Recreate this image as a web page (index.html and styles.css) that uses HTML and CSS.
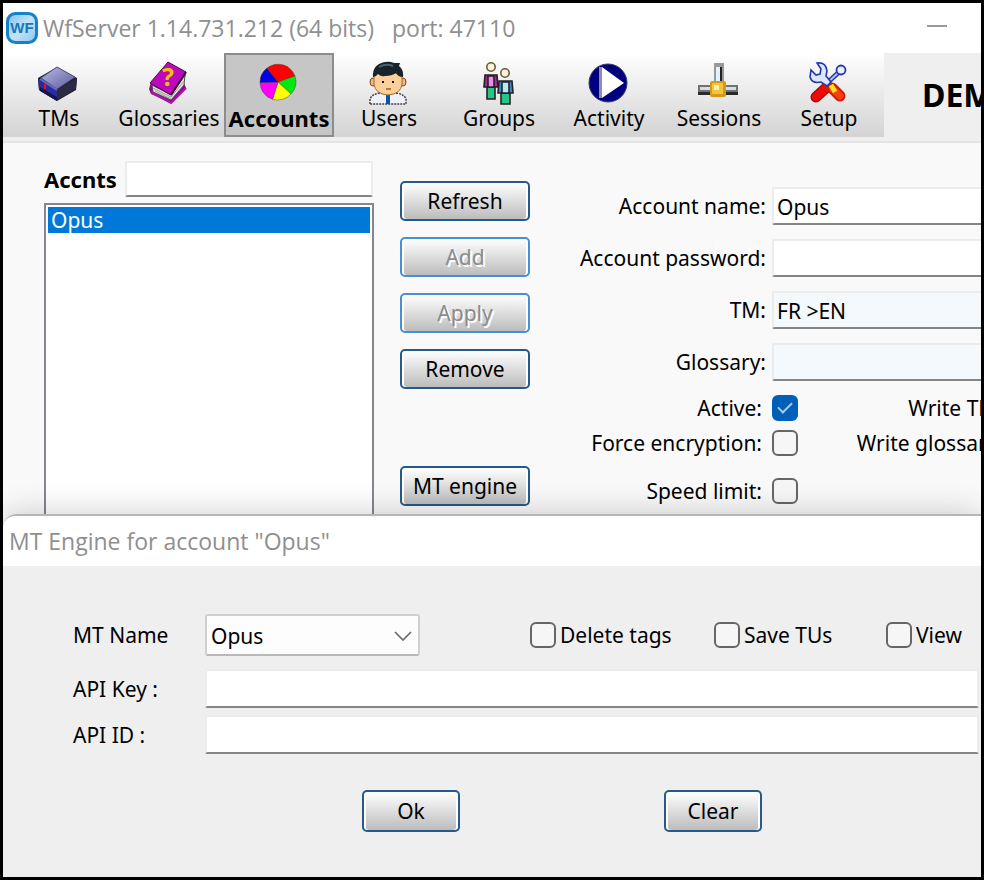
FILE: index.html
```html
<!DOCTYPE html>
<html lang="en">
<head>
<meta charset="utf-8">
<title>WfServer</title>
<link rel="stylesheet" href="styles.css">
</head>
<body>
<div class="window">
  <header class="titlebar">
    <svg class="logo" viewBox="0 0 32 32" aria-hidden="true">
      <defs><linearGradient id="lg" x1="0" y1="0" x2="1" y2="1"><stop offset="0" stop-color="#7fc0ea"/><stop offset=".5" stop-color="#c3e2f7"/><stop offset="1" stop-color="#8cc6ec"/></linearGradient></defs>
      <rect x="1.5" y="1.5" width="29" height="29" rx="8" fill="url(#lg)" stroke="#1482c6" stroke-width="3"/>
      <text x="16" y="21" text-anchor="middle" class="logo-text">WF</text>
    </svg>
    <h1 class="title">WfServer 1.14.731.212 (64 bits)</h1>
    <span class="title">port: 47110</span>
    <button class="minimize" type="button" aria-label="Minimize"></button>
  </header>

  <div class="topbar">
    <nav class="toolbar">
      <button class="tool" type="button">
        <svg class="icon" viewBox="0 0 44 44" aria-hidden="true">
          <defs><linearGradient id="tm" x1="0" y1="0" x2="1" y2="1"><stop offset="0" stop-color="#b9b9e6"/><stop offset="1" stop-color="#5c5c9c"/></linearGradient></defs>
          <path d="M20 6 L40 17 L39 29 L20 40 L2 29 L1 17Z" fill="#1c1c34"/>
          <path d="M1 18 L20 29 V40 L2 29Z" fill="#2b2ba0"/>
          <path d="M3 26 L20 36 V40 L3 30Z" fill="#15154e"/>
          <path d="M20 29 L40 17 L39 28 L20 39Z" fill="#2a2a42"/>
          <path d="M20 6 L38 16 L20 28 L4 17Z" fill="url(#tm)" stroke="#55557c"/>
          <path d="M3 18 L20 29" fill="none" stroke="#6b6bc4" stroke-width="2"/>
          <rect x="7" y="23" width="2" height="5" fill="#f01010"/>
        </svg>
        <span>TMs</span>
      </button>
      <button class="tool" type="button">
        <svg class="icon" viewBox="0 0 44 44" aria-hidden="true">
          <path d="M4 21 L2 28 L4 33 L24 42 L39 27 L37 22 L39 11Z" fill="#8a0a8a"/>
          <path d="M5 24 L24 34 L38 14 L37 24 L24 39 L6 31Z" fill="#e4e4dc" stroke="#55505a"/>
          <path d="M6 27 L24 36 L37 20 M8 30 L24 38" stroke="#9a9a94" fill="none"/>
          <path d="M4 31 L24 42 L39 27" fill="none" stroke="#b011b0" stroke-width="2"/>
          <path d="M21 1 L39 11 L24 34 L3 22Z" fill="#bd08bd" stroke="#55064f"/>
          <path d="M39 11 L24 34" stroke="#33062f" stroke-width="2"/>
          <text x="21" y="25" text-anchor="middle" class="book-mark">?</text>
        </svg>
        <span>Glossaries</span>
      </button>
      <button class="tool tool-active" type="button" aria-pressed="true">
        <svg class="icon" viewBox="0 0 44 44" aria-hidden="true">
          <g stroke="#303030" stroke-width=".4">
            <path d="M21 21 L9.7 7.3 A18 18 0 0 1 38 15Z" fill="#f00"/>
            <path d="M21 21 L38 15 A18 18 0 0 1 34 33Z" fill="#00e810"/>
            <path d="M21 21 L34 33 A18 18 0 0 1 15.5 38.3Z" fill="#ff0"/>
            <path d="M21 21 L15.5 38.3 A18 18 0 0 1 3 21.5Z" fill="#f0f"/>
            <path d="M21 21 L3 21.5 A18 18 0 0 1 9.7 7.3Z" fill="#0000e0"/>
          </g>
        </svg>
        <span>Accounts</span>
      </button>
      <button class="tool" type="button">
        <svg class="icon" viewBox="0 0 44 44" aria-hidden="true">
          <path d="M3 43 V38 Q5 33 13 32 H29 Q37 33 39 38 V43Z" fill="#eef1fa" stroke="#444" stroke-width="1.5" stroke-dasharray="2 1"/>
          <path d="M13 30 H29 L26 34 H16Z" fill="#efb97c"/>
          <path d="M19 34 H23 V43 H19Z" fill="#0a55a8"/>
          <ellipse cx="6" cy="21" rx="3" ry="4" fill="#f2b774" stroke="#7a4a20"/>
          <ellipse cx="36" cy="21" rx="3" ry="4" fill="#f2b774" stroke="#7a4a20"/>
          <path d="M7 12 H35 V23 Q34 33 21 34 Q8 33 7 23Z" fill="#fbd09a" stroke="#a06a38"/>
          <path d="M6 16 Q5 7 12 3 Q20 -1 27 2 L33 2 L32 5 Q37 9 36 16 Q31 16 29 12 Q25 15 18 15 Q14 16 11 13 Q9 16 6 16Z" fill="#17232b"/>
          <path d="M12 6 Q19 2 26 5" stroke="#4c6270" stroke-width="2" fill="none"/>
          <path d="M15 20 H17 V22 H15Z M25 20 H27 V22 H25Z" fill="#111"/>
          <path d="M19 28 H24" stroke="#9b5a30" stroke-width="1.5"/>
        </svg>
        <span>Users</span>
      </button>
      <button class="tool" type="button">
        <svg class="icon" viewBox="0 0 44 44" aria-hidden="true">
          <g stroke="#222" stroke-width="1.6">
            <circle cx="14" cy="6" r="4.2" fill="#fff3dc" stroke="#6b5a3a"/>
            <path d="M10 26 H18 V38 H10Z" fill="#25c58a"/>
            <path d="M8 14 H20 L21 26 H7Z" fill="#a52a9a"/>
            <path d="M11 15 H17 V26 H11Z" fill="#f08af0"/>
            <circle cx="28" cy="12" r="4.2" fill="#fff3dc" stroke="#6b5a3a"/>
            <path d="M24 32 H33 V43 H24Z" fill="#25c58a"/>
            <path d="M22 20 H35 L36 32 H21Z" fill="#3f86c4"/>
            <path d="M25 21 H32 V32 H25Z" fill="#b5e8ff"/>
          </g>
        </svg>
        <span>Groups</span>
      </button>
      <button class="tool" type="button">
        <svg class="icon" viewBox="0 0 44 44" aria-hidden="true">
          <circle cx="21" cy="22" r="19" fill="#00007e" stroke="#3c3c66"/>
          <path d="M12 6 H15 V37 H12Z" fill="#8c8cb0"/>
          <path d="M15 6 L37 22 L15 37Z" fill="#fff"/>
        </svg>
        <span>Activity</span>
      </button>
      <button class="tool" type="button">
        <svg class="icon" viewBox="0 0 44 44" aria-hidden="true">
          <rect x="17" y="2" width="10" height="20" fill="#999"/>
          <rect x="19" y="6" width="4" height="16" fill="#e4f2fb"/>
          <rect x="23" y="6" width="2" height="16" fill="#222"/>
          <rect x="1" y="24" width="40" height="10" fill="#6f7376"/>
          <rect x="3" y="26" width="36" height="3" fill="#d5dfe2"/>
          <rect x="1" y="31" width="40" height="3" fill="#2a2a2a"/>
          <rect x="13" y="20" width="16" height="16" rx="2" fill="#d49a18"/>
          <rect x="15" y="22" width="11" height="11" fill="#f2c440"/>
          <rect x="17" y="24" width="5" height="5" fill="#fff0a8"/>
        </svg>
        <span>Sessions</span>
      </button>
      <button class="tool" type="button">
        <svg class="icon" viewBox="0 0 44 44" aria-hidden="true">
          <path d="M20 26 L9 36" stroke="#a80808" stroke-width="11" stroke-linecap="round"/>
          <path d="M20 26 L9 36" stroke="#ef0808" stroke-width="8" stroke-linecap="round"/>
          <path d="M25 27 L33 35" stroke="#d01c08" stroke-width="11" stroke-linecap="round"/>
          <path d="M26 28 L33 35" stroke="#ff3b10" stroke-width="7" stroke-linecap="round"/>
          <path d="M24 24 L28 31" stroke="#ffe21a" stroke-width="5"/>
          <path d="M19 23 L31 12" stroke="#2438a8" stroke-width="5"/>
          <path d="M19 23 L31 12" stroke="#a9c0f4" stroke-width="2"/>
          <circle cx="34" cy="9" r="4.5" fill="#e8eeff" stroke="#2438a8" stroke-width="1.8"/>
          <path d="M10 2 Q19 1 20 10 L19 15 L24 21 L20 25 L14 21 Q5 23 3 16 L4 9 L9 14 L13 13 L14 8Z" fill="#dce7ff" stroke="#2438a8" stroke-width="1.6"/>
        </svg>
        <span>Setup</span>
      </button>
    </nav>
    <div class="mode">DEM</div>
  </div>

  <main class="accounts">
    <section class="picker">
      <div class="search">
        <label class="search-label" for="accnts">Accnts</label>
        <input class="field search-field" id="accnts" type="text">
      </div>
      <ul class="list" aria-label="Accounts">
        <li class="list-item">Opus</li>
      </ul>
    </section>

    <div class="actions">
      <button class="btn" type="button">Refresh</button>
      <button class="btn" type="button" disabled>Add</button>
      <button class="btn" type="button" disabled>Apply</button>
      <button class="btn" type="button">Remove</button>
      <button class="btn btn-engine" type="button">MT engine</button>
    </div>

    <form class="details">
      <div class="row"><label for="name">Account name:</label><input class="field" id="name" type="text" value="Opus"></div>
      <div class="row"><label for="pass">Account password:</label><input class="field" id="pass" type="password"></div>
      <div class="row"><label for="tm-path">TM:</label><input class="field field-tint" id="tm-path" type="text" value="FR &gt;EN"></div>
      <div class="row"><label for="gloss">Glossary:</label><input class="field field-tint" id="gloss" type="text"></div>
      <div class="checks">
        <div class="row"><label for="active">Active:</label><input class="check" id="active" type="checkbox" checked><span class="extra">Write TM:</span></div>
        <div class="row"><label for="force">Force encryption:</label><input class="check" id="force" type="checkbox"><span class="extra">Write glossary:</span></div>
        <div class="row row-speed"><label for="speed">Speed limit:</label><input class="check" id="speed" type="checkbox"></div>
      </div>
    </form>
  </main>

  <section class="dialog" role="dialog" aria-labelledby="dlg-title">
    <h2 class="title dialog-title" id="dlg-title">MT Engine for account "Opus"</h2>
    <form class="dialog-body">
      <div class="drow drow-first">
        <label for="mt">MT Name</label>
        <div class="select-wrap">
          <select class="select" id="mt"><option>Opus</option></select>
          <svg class="chevron" viewBox="0 0 18 10" aria-hidden="true"><path d="M1 1 L9 9 L17 1" fill="none" stroke="#666" stroke-width="1.6"/></svg>
        </div>
        <div class="options">
          <label class="option"><input class="check" type="checkbox">Delete tags</label>
          <label class="option"><input class="check" type="checkbox">Save TUs</label>
          <label class="option"><input class="check" type="checkbox">View</label>
        </div>
      </div>
      <div class="drow"><label for="key">API Key :</label><input class="field" id="key" type="text"></div>
      <div class="drow"><label for="id">API ID :</label><input class="field" id="id" type="text"></div>
      <div class="buttons">
        <button class="btn btn-dialog" type="button">Ok</button>
        <button class="btn btn-dialog" type="button">Clear</button>
      </div>
    </form>
  </section>
</div>
</body>
</html>
```
FILE: styles.css
```css
* { box-sizing: border-box; }

body {
  margin: 0;
  background: #000;
  color: #000;
  font: 21px/26px "Noto Sans", "Open Sans", sans-serif;
}

button, input, select { font: inherit; color: inherit; margin: 0; }

.window {
  display: flex;
  flex-direction: column;
  min-height: 100vh;
  border: 3px solid #000;
  background: #f9f9f9;
  overflow: hidden;
}

/* Title bar */
.titlebar {
  display: flex;
  align-items: center;
  height: 50px;
  padding: 0 34px 0 3px;
  background: #fff;
}
.logo { width: 32px; height: 32px; margin-right: 5px; }
.logo-text { font: bold 15px "Liberation Sans", sans-serif; fill: #1378bd; }
.title {
  margin: 0;
  color: #8f8f8f;
  font: 23px/32px "Open Sans", "Noto Sans", sans-serif;
  white-space: nowrap;
}
.titlebar .title + .title { margin-left: 18px; }
.minimize {
  width: 20px;
  height: 20px;
  margin: 0 0 4px auto;
  padding: 0;
  border: 0;
  background: linear-gradient(#999, #999) center / 20px 2px no-repeat;
}

/* Toolbar */
.topbar {
  display: flex;
  background: #efefef;
  border-bottom: 2px solid #e4e4e4;
  height: 90px;
  padding-bottom: 4px;
}
.toolbar {
  display: flex;
  flex: none;
  padding-left: 1px;
  background: linear-gradient(#fff, #d3d3d3);
}
.tool {
  display: flex;
  flex-direction: column;
  align-items: center;
  width: 110px;
  padding: 6px 0 0;
  border: 2px solid transparent;
  background: none;
  white-space: nowrap;
}
.tool-active { border-color: #8c8c8c; background: #c6c6c6; font-size: 22px; font-weight: bold; }
.icon { width: 44px; height: 44px; }
.book-mark { font: bold 25px "Noto Sans", sans-serif; fill: #f0c000; }
.mode {
  flex: 1;
  min-width: 0;
  padding-left: 38px;
  font-size: 32px;
  font-weight: bold;
  line-height: 84px;
  overflow: hidden;
}

/* Accounts pane */
.accounts {
  display: flex;
  flex: 1;
  padding-left: 41px;
  overflow: hidden;
}
.picker {
  display: flex;
  flex: none;
  flex-direction: column;
  gap: 6px;
  width: 330px;
  padding-top: 18px;
}
.search { display: flex; align-items: center; justify-content: space-between; padding-right: 1px; }
.search-label { font-size: 22px; font-weight: bold; }
.field {
  flex: 1;
  min-width: 0;
  height: 38px;
  padding: 2px 3px 0;
  border: 2px solid #ececec;
  border-bottom-color: #858585;
  border-radius: 2px;
  background: #fff;
}
.search-field { flex: none; width: 248px; height: 36px; }
.field-tint { background: #f4f9fd; }
.list {
  flex: 1;
  margin: 0;
  padding: 2px;
  border: 2px solid #828790;
  border-bottom: 0;
  background: #fff;
  list-style: none;
}
.list-item { padding-left: 3px; background: #0078d7; color: #fff; }

.actions {
  display: flex;
  flex: none;
  flex-direction: column;
  gap: 16px;
  width: 130px;
  margin-left: 26px;
  padding-top: 38px;
}
.btn {
  height: 40px;
  padding: 0;
  border: 2px solid #245a8c;
  border-radius: 5px;
  background: linear-gradient(#fff, #bcbcbc);
  box-shadow: inset 2px 0 #fff, inset -2px 0 #fff;
}
.btn:disabled { border-color: #4690d4; color: #8c8c8c; text-shadow: 2px 2px #fff; }
.btn-engine { margin-top: 61px; }

.details {
  display: flex;
  flex: 1;
  flex-direction: column;
  gap: 14px;
  min-width: 0;
  padding-top: 44px;
  overflow: hidden;
}
.row { display: flex; align-items: center; white-space: nowrap; }
.row > label { flex: none; width: 236px; margin-right: 6px; text-align: right; }
.checks .row > label { padding-right: 4px; }
.row .field { margin-right: -4px; }
.checks { display: flex; flex-direction: column; gap: 9px; }
.row-speed { margin-top: 13px; }
.extra { flex: none; width: 205px; text-align: right; }

.check {
  display: grid;
  flex: none;
  place-items: center;
  width: 26px;
  height: 26px;
  border: 2px solid #666;
  border-radius: 6px;
  background: #f6f6f6;
  appearance: none;
}
.check:checked { border-color: #005fb8; background: #005fb8; }
.check:checked::after {
  content: "";
  width: 12px;
  height: 6px;
  margin-bottom: 4px;
  border: solid #a9cbea;
  border-width: 0 0 2px 2px;
  transform: rotate(-45deg);
}

/* Dialog */
.dialog {
  position: relative;
  border-top: 2px solid #b6b6b6;
  border-top-left-radius: 14px;
  background: #efefef;
  box-shadow: 0 0 32px rgba(0, 0, 0, .2);
}
.dialog-title {
  height: 50px;
  padding: 9px 6px;
  border-top-left-radius: 12px;
  background: #fff;
}
.dialog-body {
  display: flex;
  flex-direction: column;
  gap: 7px;
  padding: 48px 2px 45px 70px;
}
.drow { display: flex; align-items: center; white-space: nowrap; }
.drow > label { flex: none; width: 132px; }
.drow .field { height: 39px; }
.drow-first { margin-bottom: 6px; }
.select-wrap { position: relative; flex: none; width: 215px; }
.select {
  width: 100%;
  height: 42px;
  padding: 2px 4px 0;
  border: 2px solid #d0d0d0;
  border-bottom-color: #b8b8b8;
  border-radius: 3px;
  background: #fdfdfd;
  appearance: none;
}
.chevron { position: absolute; right: 8px; top: 17px; width: 18px; height: 10px; pointer-events: none; }
.options { display: grid; flex: 1; grid-template-columns: 184px 172px auto; margin-left: 110px; }
.option { display: flex; align-items: center; gap: 4px; }
.buttons { display: flex; gap: 204px; margin-top: 29px; padding-left: 289px; }
.btn-dialog { width: 98px; height: 42px; }
```
